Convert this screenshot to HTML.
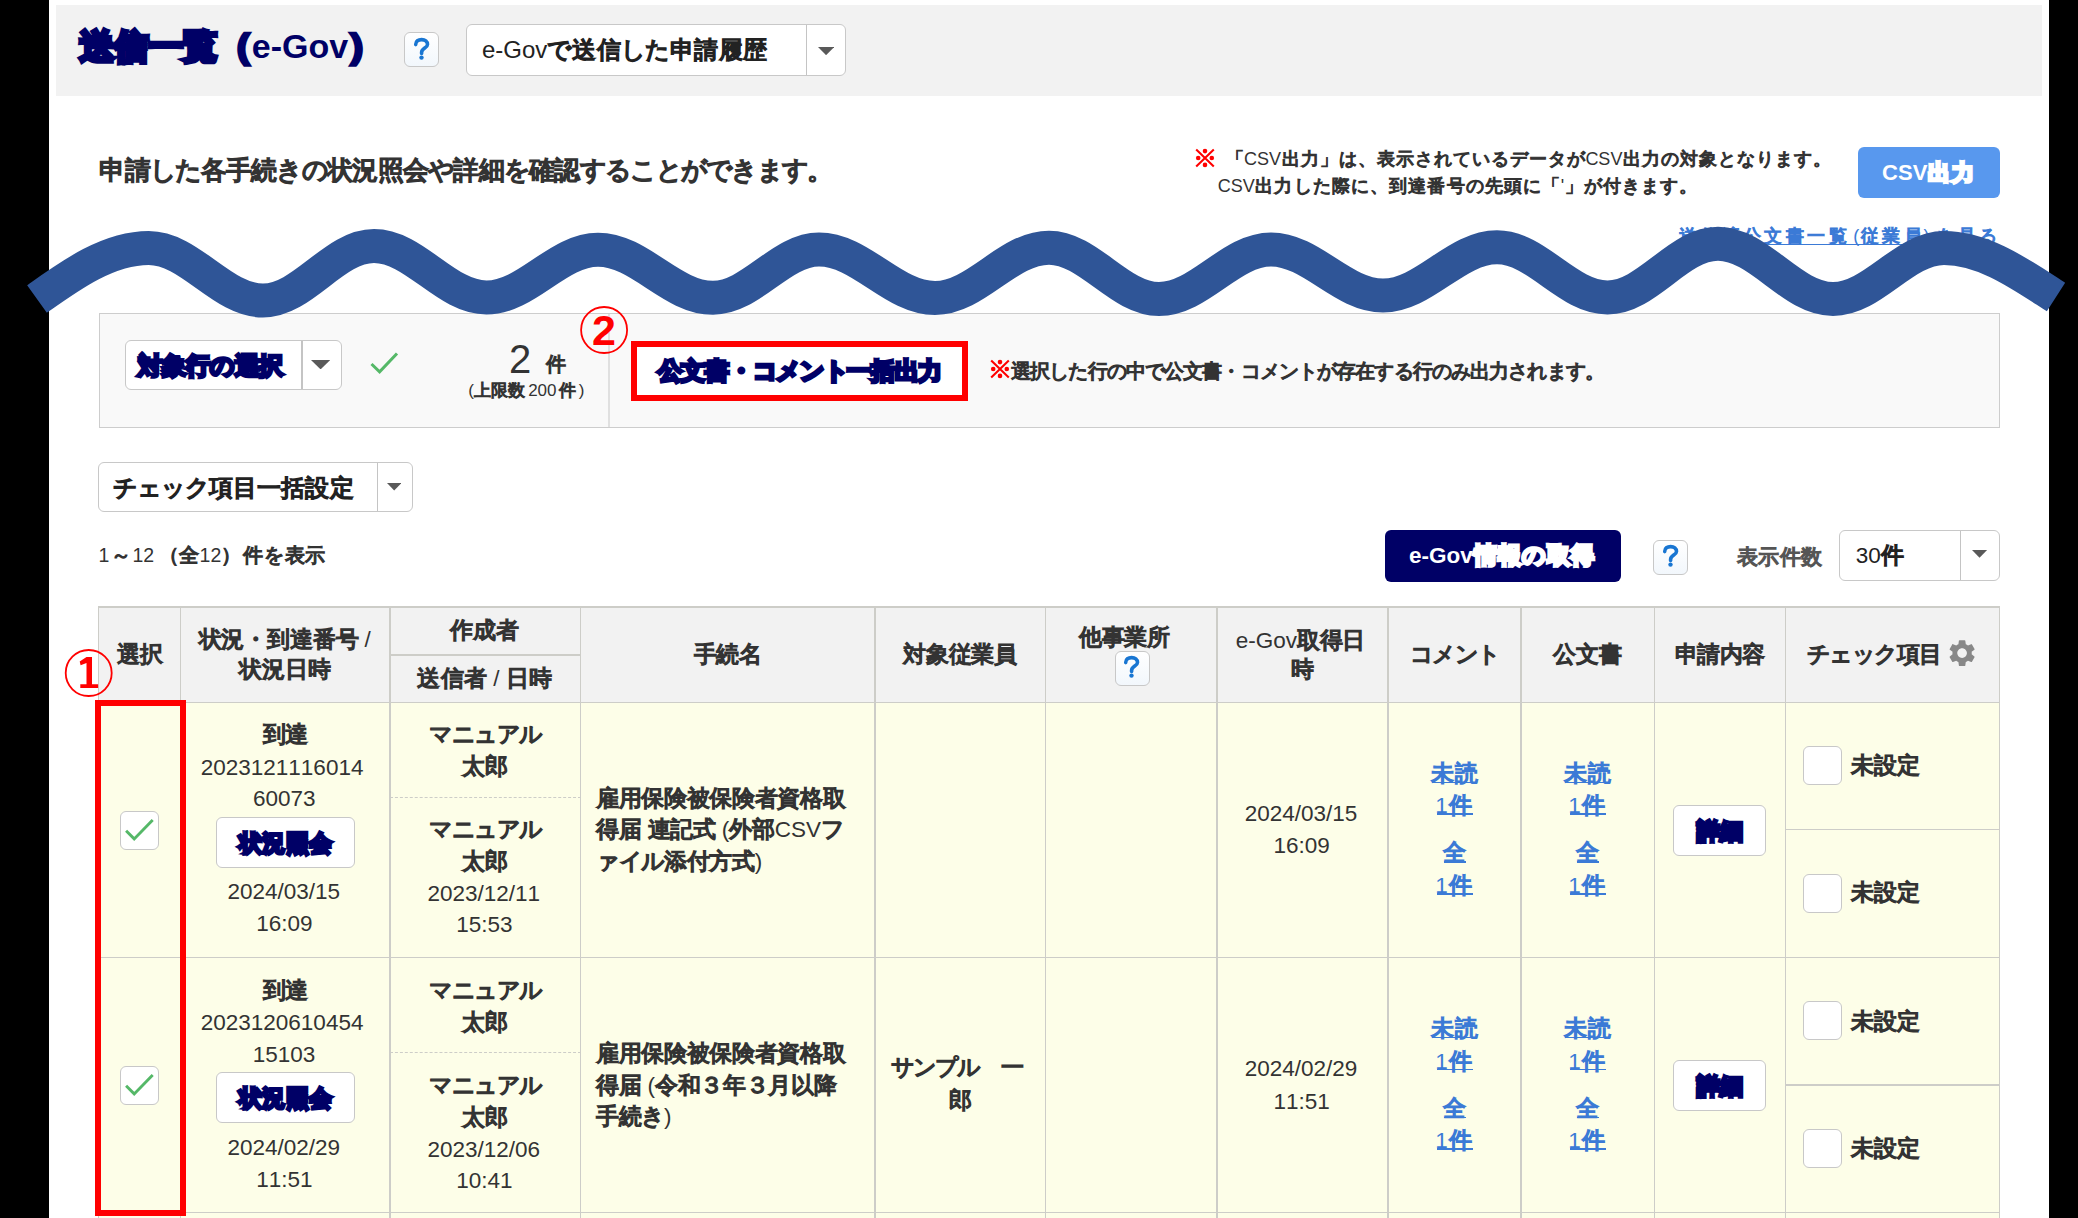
<!DOCTYPE html>
<html lang="ja"><head><meta charset="utf-8"><title>送信一覧（e-Gov）</title>
<style>
*{box-sizing:border-box;margin:0;padding:0}
html,body{width:2078px;height:1218px;overflow:hidden;background:#fff}
body{position:relative;font-family:"Liberation Sans",sans-serif;color:#333;font-kerning:none}
.a{position:absolute}
.t{position:absolute;white-space:nowrap}
.qb{position:absolute;width:35px;height:35px;border:1.5px solid #c8c8c8;border-radius:6px;background:linear-gradient(#fff,#f2f7fc);color:transparent;font-size:1px;overflow:hidden}
.dd{position:absolute;background:#fff;border:1.5px solid #c8c8c8;border-radius:6px}
.dd .dv{position:absolute;top:0;bottom:0;width:1.2px;background:#c4c4c4}
.j{display:inline-block;width:var(--p);text-align:center;-webkit-text-stroke:var(--s) currentColor}
.btn{position:absolute;background:#fff;border:1.5px solid #c8c8c8;border-radius:6px}
.cb{position:absolute;width:39px;height:39px;background:#fff;border:1.5px solid #c8c8c8;border-radius:6px}
</style></head><body>
<div class="a" style="left:0.00px;top:0.00px;width:49.00px;height:1218.00px;background:#000"></div>
<div class="a" style="left:2049.00px;top:0.00px;width:29.00px;height:1218.00px;background:#000"></div>
<div class="a" style="left:56.00px;top:4.50px;width:1986.00px;height:91.00px;background:#f2f2f2"></div>
<div class="t " style="left:79.30px;top:23.40px;font-size:34.00px;line-height:47.60px;color:#000066;font-weight:bold;--p:34.50px;--s:4.68px;"><span class="j">送</span><span class="j">信</span><span class="j">一</span><span class="j">覧</span><span class="j">（</span>e-Gov<span class="j">）</span></div>
<div class="qb" style="left:404.2px;top:32.2px"><svg width="35" height="35" viewBox="0 0 35 35" style="position:absolute;left:-1.5px;top:-1.5px"><path d="M11.7 12.6C11.7 9.1 14.3 7.6 17.6 7.6C21.1 7.6 23.5 9.6 23.5 12.4C23.5 15.8 17.6 16.4 17.6 20.4V21.4" fill="none" stroke="#1976d2" stroke-width="3.6" stroke-linecap="round"/><circle cx="17.5" cy="25.6" r="2.2" fill="#1976d2"/></svg>?</div>
<div class="dd" style="left:466.0px;top:24.2px;width:379.8px;height:51.7px"><div class="dv" style="left:339.2px"></div></div>
<svg class="a" style="left:818.00px;top:46.80px" width="16.20" height="8.20" viewBox="0 0 16.20 8.20"><path d="M0 0H16.20L8.10 8.20Z" fill="#595959"/></svg>
<div class="t " style="left:481.98px;top:32.90px;font-size:24.00px;line-height:33.60px;color:#222;--p:24.47px;--s:1.53px;">e-Gov<span class="j">で</span><span class="j">送</span><span class="j">信</span><span class="j">し</span><span class="j">た</span><span class="j">申</span><span class="j">請</span><span class="j">履</span><span class="j">歴</span></div>
<div class="t " style="left:99.42px;top:153.35px;font-size:25.50px;line-height:35.70px;color:#333;--p:25.29px;--s:1.62px;"><span class="j">申</span><span class="j">請</span><span class="j">し</span><span class="j">た</span><span class="j">各</span><span class="j">手</span><span class="j">続</span><span class="j">き</span><span class="j">の</span><span class="j">状</span><span class="j">況</span><span class="j">照</span><span class="j">会</span><span class="j">や</span><span class="j">詳</span><span class="j">細</span><span class="j">を</span><span class="j">確</span><span class="j">認</span><span class="j">す</span><span class="j">る</span><span class="j">こ</span><span class="j">と</span><span class="j">が</span><span class="j">で</span><span class="j">き</span><span class="j">ま</span><span class="j">す</span><span class="j">。</span></div>
<div class="t" style="left:1195.70px;top:147.30px;font-size:18px;line-height:22px;color:transparent">※</div>
<svg class="a" style="left:1193.70px;top:147.30px" width="22" height="22" viewBox="-11 -11 22 22"><path d="M-8.8 -8.4L8.8 8.4M8.8 -8.4L-8.8 8.4" stroke="#f00" stroke-width="2.1"/><circle cx="0" cy="-6.9" r="2.3" fill="#f00"/><circle cx="-6.8" cy="0" r="2.3" fill="#f00"/><circle cx="6.8" cy="0" r="2.3" fill="#f00"/><circle cx="0" cy="6.9" r="2.3" fill="#f00"/></svg>
<div class="t " style="left:1225.10px;top:146.60px;font-size:18.00px;line-height:25.20px;color:#333;--p:19.03px;--s:1.14px;"><span class="j">「</span>CSV<span class="j">出</span><span class="j">力</span><span class="j">」</span><span class="j">は</span><span class="j">、</span><span class="j">表</span><span class="j">示</span><span class="j">さ</span><span class="j">れ</span><span class="j">て</span><span class="j">い</span><span class="j">る</span><span class="j">デ</span><span class="j">ー</span><span class="j">タ</span><span class="j">が</span>CSV<span class="j">出</span><span class="j">力</span><span class="j">の</span><span class="j">対</span><span class="j">象</span><span class="j">と</span><span class="j">な</span><span class="j">り</span><span class="j">ま</span><span class="j">す</span><span class="j">。</span></div>
<div class="t " style="left:1217.69px;top:174.10px;font-size:18.00px;line-height:25.20px;color:#333;--p:19.14px;--s:1.14px;">CSV<span class="j">出</span><span class="j">力</span><span class="j">し</span><span class="j">た</span><span class="j">際</span><span class="j">に</span><span class="j">、</span><span class="j">到</span><span class="j">達</span><span class="j">番</span><span class="j">号</span><span class="j">の</span><span class="j">先</span><span class="j">頭</span><span class="j">に</span><span class="j">「</span>&#x27;<span class="j">」</span><span class="j">が</span><span class="j">付</span><span class="j">き</span><span class="j">ま</span><span class="j">す</span><span class="j">。</span></div>
<div class="a" style="left:1858px;top:147px;width:142px;height:51px;background:#5898ee;border-radius:6px"></div>
<div class="t " style="left:1882.10px;top:157.80px;font-size:22.00px;line-height:30.80px;color:#fff;font-weight:bold;--p:23.50px;--s:3.03px;">CSV<span class="j">出</span><span class="j">力</span></div>
<div class="t " style="left:1677.10px;top:223.60px;font-size:18.00px;line-height:25.20px;color:#3b7ad6;--p:21.41px;--s:1.14px;"><span class="j">送</span><span class="j">信</span><span class="j">済</span><span class="j">公</span><span class="j">文</span><span class="j">書</span><span class="j">一</span><span class="j">覧</span> (<span class="j">従</span><span class="j">業</span><span class="j">員</span>) <span class="j">を</span><span class="j">見</span><span class="j">る</span></div>
<div class="a" style="left:1677.60px;top:243.50px;width:320.60px;height:1.50px;background:#3b7ad6"></div>
<div class="a" style="left:98.50px;top:312.70px;width:1901.00px;height:115.70px;background:#f9f9f9;border:1.5px solid #cdcdcd"></div>
<div class="a" style="left:608.00px;top:314.00px;width:1.50px;height:113.00px;background:#e0e0e0"></div>
<div class="dd" style="left:125.0px;top:339.5px;width:217.0px;height:50.2px"><div class="dv" style="left:175.4px"></div></div>
<svg class="a" style="left:310.50px;top:360.10px" width="19.20" height="9.40" viewBox="0 0 19.20 9.40"><path d="M0 0H19.20L9.60 9.40Z" fill="#595959"/></svg>
<div class="t " style="left:137.80px;top:349.40px;font-size:24.00px;line-height:33.60px;color:#000066;font-weight:bold;--p:24.23px;--s:3.31px;"><span class="j">対</span><span class="j">象</span><span class="j">行</span><span class="j">の</span><span class="j">選</span><span class="j">択</span></div>
<svg class="a" style="left:360px;top:340px" width="50" height="45" viewBox="360 340 50 45"><path d="M371.5 364 L379.6 371.8 L397 353.5" fill="none" stroke="#55b868" stroke-width="3"/></svg>
<div class="t " style="left:508.99px;top:331.00px;font-size:40.00px;line-height:56.00px;color:#333;">2</div>
<div class="t " style="left:545.60px;top:350.20px;font-size:20.00px;line-height:28.00px;color:#333;--p:20.00px;--s:1.27px;"><span class="j">件</span></div>
<div class="t " style="left:468.35px;top:379.30px;font-size:17.00px;line-height:23.80px;color:#333;--p:16.80px;--s:1.08px;">(<span class="j">上</span><span class="j">限</span><span class="j">数</span></div>
<div class="t " style="left:528.15px;top:379.30px;font-size:17.00px;line-height:23.80px;color:#333;--p:22.25px;--s:1.08px;">200<span class="j">件</span>)</div>
<div class="a" style="left:631.00px;top:341.00px;width:337.00px;height:60.00px;background:#fff;border:6px solid #f00"></div>
<div class="t " style="left:657.80px;top:354.40px;font-size:24.00px;line-height:33.60px;color:#000066;font-weight:bold;--p:23.70px;--s:3.31px;"><span class="j">公</span><span class="j">文</span><span class="j">書</span><span class="j">・</span><span class="j">コ</span><span class="j">メ</span><span class="j">ン</span><span class="j">ト</span><span class="j">一</span><span class="j">括</span><span class="j">出</span><span class="j">力</span></div>
<div class="t" style="left:991.30px;top:358.10px;font-size:18px;line-height:22px;color:transparent">※</div>
<svg class="a" style="left:989.30px;top:358.10px" width="22" height="22" viewBox="-11 -11 22 22"><path d="M-8.8 -8.4L8.8 8.4M8.8 -8.4L-8.8 8.4" stroke="#f00" stroke-width="2.1"/><circle cx="0" cy="-6.9" r="2.3" fill="#f00"/><circle cx="-6.8" cy="0" r="2.3" fill="#f00"/><circle cx="6.8" cy="0" r="2.3" fill="#f00"/><circle cx="0" cy="6.9" r="2.3" fill="#f00"/></svg>
<div class="t " style="left:1011.02px;top:357.55px;font-size:19.50px;line-height:27.30px;color:#333;--p:19.13px;--s:1.24px;"><span class="j">選</span><span class="j">択</span><span class="j">し</span><span class="j">た</span><span class="j">行</span><span class="j">の</span><span class="j">中</span><span class="j">で</span><span class="j">公</span><span class="j">文</span><span class="j">書</span><span class="j">・</span><span class="j">コ</span><span class="j">メ</span><span class="j">ン</span><span class="j">ト</span><span class="j">が</span><span class="j">存</span><span class="j">在</span><span class="j">す</span><span class="j">る</span><span class="j">行</span><span class="j">の</span><span class="j">み</span><span class="j">出</span><span class="j">力</span><span class="j">さ</span><span class="j">れ</span><span class="j">ま</span><span class="j">す</span><span class="j">。</span></div>
<div class="dd" style="left:98.3px;top:461.9px;width:315.2px;height:50.5px"><div class="dv" style="left:278.0px"></div></div>
<svg class="a" style="left:386.80px;top:483.30px" width="14.40" height="7.50" viewBox="0 0 14.40 7.50"><path d="M0 0H14.40L7.20 7.50Z" fill="#595959"/></svg>
<div class="t " style="left:112.50px;top:471.40px;font-size:24.00px;line-height:33.60px;color:#222;--p:24.11px;--s:1.53px;"><span class="j">チ</span><span class="j">ェ</span><span class="j">ッ</span><span class="j">ク</span><span class="j">項</span><span class="j">目</span><span class="j">一</span><span class="j">括</span><span class="j">設</span><span class="j">定</span></div>
<div class="t " style="left:98.41px;top:542.15px;font-size:19.50px;line-height:27.30px;color:#333;--p:23.22px;--s:1.24px;">1<span class="j">～</span>12</div>
<div class="t " style="left:159.20px;top:542.15px;font-size:19.50px;line-height:27.30px;color:#333;--p:20.20px;--s:1.24px;"><span class="j">（</span><span class="j">全</span>12<span class="j">）</span></div>
<div class="t " style="left:242.93px;top:542.15px;font-size:19.50px;line-height:27.30px;color:#333;--p:20.71px;--s:1.24px;"><span class="j">件</span><span class="j">を</span><span class="j">表</span><span class="j">示</span></div>
<div class="a" style="left:1385.4px;top:529.5px;width:235.6px;height:52.3px;background:#000066;border-radius:6px"></div>
<div class="t " style="left:1409.12px;top:540.45px;font-size:22.50px;line-height:31.50px;color:#fff;font-weight:bold;--p:24.40px;--s:3.10px;">e-Gov<span class="j">情</span><span class="j">報</span><span class="j">の</span><span class="j">取</span><span class="j">得</span></div>
<div class="qb" style="left:1653.0px;top:539.6px"><svg width="35" height="35" viewBox="0 0 35 35" style="position:absolute;left:-1.5px;top:-1.5px"><path d="M11.7 12.6C11.7 9.1 14.3 7.6 17.6 7.6C21.1 7.6 23.5 9.6 23.5 12.4C23.5 15.8 17.6 16.4 17.6 20.4V21.4" fill="none" stroke="#1976d2" stroke-width="3.6" stroke-linecap="round"/><circle cx="17.5" cy="25.6" r="2.2" fill="#1976d2"/></svg>?</div>
<div class="t " style="left:1736.95px;top:541.50px;font-size:21.00px;line-height:29.40px;color:#555;--p:21.27px;--s:1.33px;"><span class="j">表</span><span class="j">示</span><span class="j">件</span><span class="j">数</span></div>
<div class="dd" style="left:1839.0px;top:529.7px;width:160.5px;height:51.7px"><div class="dv" style="left:119.7px"></div></div>
<svg class="a" style="left:1972.45px;top:550.10px" width="15.10" height="7.70" viewBox="0 0 15.10 7.70"><path d="M0 0H15.10L7.55 7.70Z" fill="#595959"/></svg>
<div class="t " style="left:1855.74px;top:540.45px;font-size:22.50px;line-height:31.50px;color:#222;--p:23.38px;--s:1.43px;">30<span class="j">件</span></div>
<div class="a" style="left:98.50px;top:607.00px;width:1901.00px;height:95.50px;background:#f2f2f2"></div>
<div class="a" style="left:98.50px;top:702.50px;width:1901.00px;height:516.50px;background:#fdfee8"></div>
<div class="a" style="left:97.75px;top:606.25px;width:1902.50px;height:1.50px;background:#cdcdc8"></div>
<div class="a" style="left:97.75px;top:701.75px;width:1902.50px;height:1.50px;background:#cdcdc8"></div>
<div class="a" style="left:97.75px;top:956.85px;width:1902.50px;height:1.50px;background:#cdcdc8"></div>
<div class="a" style="left:97.75px;top:1211.55px;width:1902.50px;height:1.50px;background:#cdcdc8"></div>
<div class="a" style="left:97.75px;top:606.25px;width:1.50px;height:612.00px;background:#cdcdc8"></div>
<div class="a" style="left:179.75px;top:606.25px;width:1.50px;height:612.00px;background:#cdcdc8"></div>
<div class="a" style="left:389.25px;top:606.25px;width:1.50px;height:612.00px;background:#cdcdc8"></div>
<div class="a" style="left:579.75px;top:606.25px;width:1.50px;height:612.00px;background:#cdcdc8"></div>
<div class="a" style="left:874.25px;top:606.25px;width:1.50px;height:612.00px;background:#cdcdc8"></div>
<div class="a" style="left:1044.75px;top:606.25px;width:1.50px;height:612.00px;background:#cdcdc8"></div>
<div class="a" style="left:1216.25px;top:606.25px;width:1.50px;height:612.00px;background:#cdcdc8"></div>
<div class="a" style="left:1387.25px;top:606.25px;width:1.50px;height:612.00px;background:#cdcdc8"></div>
<div class="a" style="left:1520.25px;top:606.25px;width:1.50px;height:612.00px;background:#cdcdc8"></div>
<div class="a" style="left:1653.75px;top:606.25px;width:1.50px;height:612.00px;background:#cdcdc8"></div>
<div class="a" style="left:1784.75px;top:606.25px;width:1.50px;height:612.00px;background:#cdcdc8"></div>
<div class="a" style="left:1998.75px;top:606.25px;width:1.50px;height:612.00px;background:#cdcdc8"></div>
<div class="a" style="left:390.00px;top:654.25px;width:190.50px;height:1.50px;background:#cdcdc8"></div>
<div class="t " style="left:116.88px;top:639.15px;font-size:22.50px;line-height:31.50px;color:#333;--p:23.08px;--s:1.43px;"><span class="j">選</span><span class="j">択</span></div>
<div class="t " style="left:198.68px;top:624.45px;font-size:22.50px;line-height:31.50px;color:#333;--p:22.82px;--s:1.43px;"><span class="j">状</span><span class="j">況</span><span class="j">・</span><span class="j">到</span><span class="j">達</span><span class="j">番</span><span class="j">号</span> /</div>
<div class="t " style="left:239.38px;top:654.45px;font-size:22.50px;line-height:31.50px;color:#333;--p:22.84px;--s:1.43px;"><span class="j">状</span><span class="j">況</span><span class="j">日</span><span class="j">時</span></div>
<div class="t " style="left:450.27px;top:615.45px;font-size:22.50px;line-height:31.50px;color:#333;--p:22.98px;--s:1.43px;"><span class="j">作</span><span class="j">成</span><span class="j">者</span></div>
<div class="t " style="left:417.18px;top:663.15px;font-size:22.50px;line-height:31.50px;color:#333;--p:23.29px;--s:1.43px;"><span class="j">送</span><span class="j">信</span><span class="j">者</span> / <span class="j">日</span><span class="j">時</span></div>
<div class="t " style="left:693.88px;top:639.45px;font-size:22.50px;line-height:31.50px;color:#333;--p:22.42px;--s:1.43px;"><span class="j">手</span><span class="j">続</span><span class="j">名</span></div>
<div class="t " style="left:903.38px;top:639.15px;font-size:22.50px;line-height:31.50px;color:#333;--p:22.63px;--s:1.43px;"><span class="j">対</span><span class="j">象</span><span class="j">従</span><span class="j">業</span><span class="j">員</span></div>
<div class="t " style="left:1079.08px;top:622.45px;font-size:22.50px;line-height:31.50px;color:#333;--p:22.66px;--s:1.43px;"><span class="j">他</span><span class="j">事</span><span class="j">業</span><span class="j">所</span></div>
<div class="qb" style="left:1114.7px;top:650.5px"><svg width="35" height="35" viewBox="0 0 35 35" style="position:absolute;left:-1.5px;top:-1.5px"><path d="M11.7 12.6C11.7 9.1 14.3 7.6 17.6 7.6C21.1 7.6 23.5 9.6 23.5 12.4C23.5 15.8 17.6 16.4 17.6 20.4V21.4" fill="none" stroke="#1976d2" stroke-width="3.6" stroke-linecap="round"/><circle cx="17.5" cy="25.6" r="2.2" fill="#1976d2"/></svg>?</div>
<div class="t " style="left:1235.64px;top:625.45px;font-size:22.50px;line-height:31.50px;color:#333;--p:22.79px;--s:1.43px;">e-Gov<span class="j">取</span><span class="j">得</span><span class="j">日</span></div>
<div class="t " style="left:1290.88px;top:653.95px;font-size:22.50px;line-height:31.50px;color:#333;--p:23.25px;--s:1.43px;"><span class="j">時</span></div>
<div class="t " style="left:1409.58px;top:639.45px;font-size:22.50px;line-height:31.50px;color:#333;--p:22.49px;--s:1.43px;"><span class="j">コ</span><span class="j">メ</span><span class="j">ン</span><span class="j">ト</span></div>
<div class="t " style="left:1553.38px;top:639.35px;font-size:22.50px;line-height:31.50px;color:#333;--p:22.68px;--s:1.43px;"><span class="j">公</span><span class="j">文</span><span class="j">書</span></div>
<div class="t " style="left:1674.88px;top:639.35px;font-size:22.50px;line-height:31.50px;color:#333;--p:22.51px;--s:1.43px;"><span class="j">申</span><span class="j">請</span><span class="j">内</span><span class="j">容</span></div>
<div class="t " style="left:1806.88px;top:639.35px;font-size:22.50px;line-height:31.50px;color:#333;--p:22.47px;--s:1.43px;"><span class="j">チ</span><span class="j">ェ</span><span class="j">ッ</span><span class="j">ク</span><span class="j">項</span><span class="j">目</span></div>
<svg class="a" style="left:1946.4px;top:637.4px" width="32.2" height="32.2" viewBox="0 0 24 24"><path fill="#888" d="M19.14 12.94c.04-.3.06-.61.06-.94 0-.32-.02-.64-.07-.94l2.03-1.58a.49.49 0 0 0 .12-.61l-1.92-3.32a.488.488 0 0 0-.59-.22l-2.39.96c-.5-.38-1.03-.7-1.62-.94l-.36-2.540a.484.484 0 0 0-.48-.41h-3.84c-.24 0-.43.17-.47.41l-.36 2.54c-.59.24-1.13.57-1.62.94l-2.39-.96c-.22-.08-.47 0-.59.22L2.74 8.87c-.12.21-.08.47.12.61l2.03 1.58c-.05.3-.09.63-.09.94s.02.64.07.94l-2.03 1.58a.49.49 0 0 0-.12.61l1.920 3.32c.12.22.37.29.59.22l2.39-.96c.5.38 1.03.7 1.62.94l.36 2.54c.05.24.24.41.48.41h3.84c.24 0 .44-.17.47-.41l.36-2.54c.59-.24 1.13-.56 1.62-.94l2.39.96c.22.08.47 0 .59-.22l1.92-3.32c.12-.22.07-.47-.12-.61l-2.01-1.58zM12 15.6c-1.98 0-3.6-1.62-3.6-3.6s1.62-3.6 3.6-3.6 3.6 1.62 3.6 3.6-1.62 3.6-3.6 3.6z"/></svg>
<div class="cb" style="left:120.2px;top:811.0px"></div>
<svg class="a" style="left:120.2px;top:811.0px" width="40" height="40" viewBox="0 0 40 40"><path d="M6.1 19.8 L14.2 27.9 L32.7 9" fill="none" stroke="#55b868" stroke-width="2.9"/></svg>
<div class="t " style="left:262.62px;top:719.45px;font-size:22.50px;line-height:31.50px;color:#333;--p:22.62px;--s:1.43px;"><span class="j">到</span><span class="j">達</span></div>
<div class="t " style="left:200.76px;top:751.95px;font-size:22.50px;line-height:31.50px;color:#333;">2023121116014</div>
<div class="t " style="left:252.92px;top:783.45px;font-size:22.50px;line-height:31.50px;color:#333;">60073</div>
<div class="btn" style="left:215.7px;top:816.5px;width:139.3px;height:51.5px"></div>
<div class="t " style="left:239.07px;top:827.75px;font-size:22.50px;line-height:31.50px;color:#000066;font-weight:bold;--p:23.26px;--s:3.10px;"><span class="j">状</span><span class="j">況</span><span class="j">照</span><span class="j">会</span></div>
<div class="t " style="left:227.40px;top:876.45px;font-size:22.50px;line-height:31.50px;color:#333;">2024/03/15</div>
<div class="t " style="left:256.17px;top:908.45px;font-size:22.50px;line-height:31.50px;color:#333;">16:09</div>
<div class="t " style="left:428.88px;top:719.45px;font-size:22.50px;line-height:31.50px;color:#333;--p:22.65px;--s:1.43px;"><span class="j">マ</span><span class="j">ニ</span><span class="j">ュ</span><span class="j">ア</span><span class="j">ル</span></div>
<div class="t " style="left:461.88px;top:751.45px;font-size:22.50px;line-height:31.50px;color:#333;--p:22.88px;--s:1.43px;"><span class="j">太</span><span class="j">郎</span></div>
<div class="a" style="left:390.0px;top:797.2px;width:190.5px;height:0;border-top:1.5px dashed #cdcdc8"></div>
<div class="t " style="left:428.88px;top:814.45px;font-size:22.50px;line-height:31.50px;color:#333;--p:22.65px;--s:1.43px;"><span class="j">マ</span><span class="j">ニ</span><span class="j">ュ</span><span class="j">ア</span><span class="j">ル</span></div>
<div class="t " style="left:461.88px;top:846.45px;font-size:22.50px;line-height:31.50px;color:#333;--p:22.88px;--s:1.43px;"><span class="j">太</span><span class="j">郎</span></div>
<div class="t " style="left:427.48px;top:878.45px;font-size:22.50px;line-height:31.50px;color:#333;">2023/12/11</div>
<div class="t " style="left:456.13px;top:909.45px;font-size:22.50px;line-height:31.50px;color:#333;">15:53</div>
<div class="t " style="left:595.88px;top:782.95px;font-size:22.50px;line-height:31.50px;color:#333;--p:22.70px;--s:1.43px;"><span class="j">雇</span><span class="j">用</span><span class="j">保</span><span class="j">険</span><span class="j">被</span><span class="j">保</span><span class="j">険</span><span class="j">者</span><span class="j">資</span><span class="j">格</span><span class="j">取</span></div>
<div class="t " style="left:595.88px;top:814.45px;font-size:22.50px;line-height:31.50px;color:#333;--p:22.70px;--s:1.43px;"><span class="j">得</span><span class="j">届</span> <span class="j">連</span><span class="j">記</span><span class="j">式</span> (<span class="j">外</span><span class="j">部</span>CSV<span class="j">フ</span></div>
<div class="t " style="left:595.88px;top:845.95px;font-size:22.50px;line-height:31.50px;color:#333;--p:22.70px;--s:1.43px;"><span class="j">ァ</span><span class="j">イ</span><span class="j">ル</span><span class="j">添</span><span class="j">付</span><span class="j">方</span><span class="j">式</span>)</div>
<div class="t " style="left:1244.65px;top:797.85px;font-size:22.50px;line-height:31.50px;color:#333;">2024/03/15</div>
<div class="t " style="left:1273.42px;top:830.45px;font-size:22.50px;line-height:31.50px;color:#333;">16:09</div>
<div class="t " style="left:1430.88px;top:757.95px;font-size:22.50px;line-height:31.50px;color:#3b7ad6;--p:23.73px;--s:1.43px;"><span class="j">未</span><span class="j">読</span></div>
<div class="a" style="left:1432.00px;top:781.85px;width:45.20px;height:1.50px;background:#3b7ad6"></div>
<div class="t " style="left:1435.29px;top:790.45px;font-size:22.50px;line-height:31.50px;color:#3b7ad6;--p:25.54px;--s:1.43px;">1<span class="j">件</span></div>
<div class="a" style="left:1437.00px;top:813.45px;width:35.70px;height:1.50px;background:#3b7ad6"></div>
<div class="t " style="left:1443.39px;top:837.45px;font-size:22.50px;line-height:31.50px;color:#3b7ad6;--p:22.62px;--s:1.43px;"><span class="j">全</span></div>
<div class="a" style="left:1444.00px;top:861.45px;width:21.50px;height:1.50px;background:#3b7ad6"></div>
<div class="t " style="left:1435.29px;top:870.25px;font-size:22.50px;line-height:31.50px;color:#3b7ad6;--p:25.54px;--s:1.43px;">1<span class="j">件</span></div>
<div class="a" style="left:1437.00px;top:893.25px;width:35.70px;height:1.50px;background:#3b7ad6"></div>
<div class="t " style="left:1563.88px;top:757.95px;font-size:22.50px;line-height:31.50px;color:#3b7ad6;--p:23.73px;--s:1.43px;"><span class="j">未</span><span class="j">読</span></div>
<div class="a" style="left:1565.00px;top:781.85px;width:45.20px;height:1.50px;background:#3b7ad6"></div>
<div class="t " style="left:1568.29px;top:790.45px;font-size:22.50px;line-height:31.50px;color:#3b7ad6;--p:25.54px;--s:1.43px;">1<span class="j">件</span></div>
<div class="a" style="left:1570.00px;top:813.45px;width:35.70px;height:1.50px;background:#3b7ad6"></div>
<div class="t " style="left:1576.39px;top:837.45px;font-size:22.50px;line-height:31.50px;color:#3b7ad6;--p:22.62px;--s:1.43px;"><span class="j">全</span></div>
<div class="a" style="left:1577.00px;top:861.45px;width:21.50px;height:1.50px;background:#3b7ad6"></div>
<div class="t " style="left:1568.29px;top:870.25px;font-size:22.50px;line-height:31.50px;color:#3b7ad6;--p:25.54px;--s:1.43px;">1<span class="j">件</span></div>
<div class="a" style="left:1570.00px;top:893.25px;width:35.70px;height:1.50px;background:#3b7ad6"></div>
<div class="btn" style="left:1672.7px;top:804.7px;width:93.6px;height:51.3px"></div>
<div class="t " style="left:1696.88px;top:815.95px;font-size:22.50px;line-height:31.50px;color:#000066;font-weight:bold;--p:23.12px;--s:3.10px;"><span class="j">詳</span><span class="j">細</span></div>
<div class="cb" style="left:1803.0px;top:746.0px"></div>
<div class="t " style="left:1850.88px;top:750.45px;font-size:22.50px;line-height:31.50px;color:#333;--p:22.88px;--s:1.43px;"><span class="j">未</span><span class="j">設</span><span class="j">定</span></div>
<div class="a" style="left:1785.50px;top:828.95px;width:214.00px;height:1.50px;background:#cdcdc8"></div>
<div class="cb" style="left:1803.0px;top:874.0px"></div>
<div class="t " style="left:1850.88px;top:877.45px;font-size:22.50px;line-height:31.50px;color:#333;--p:22.88px;--s:1.43px;"><span class="j">未</span><span class="j">設</span><span class="j">定</span></div>
<div class="cb" style="left:120.2px;top:1066.1px"></div>
<svg class="a" style="left:120.2px;top:1066.1px" width="40" height="40" viewBox="0 0 40 40"><path d="M6.1 19.8 L14.2 27.9 L32.7 9" fill="none" stroke="#55b868" stroke-width="2.9"/></svg>
<div class="t " style="left:262.62px;top:974.55px;font-size:22.50px;line-height:31.50px;color:#333;--p:22.62px;--s:1.43px;"><span class="j">到</span><span class="j">達</span></div>
<div class="t " style="left:200.76px;top:1007.05px;font-size:22.50px;line-height:31.50px;color:#333;">2023120610454</div>
<div class="t " style="left:252.63px;top:1038.55px;font-size:22.50px;line-height:31.50px;color:#333;">15103</div>
<div class="btn" style="left:215.7px;top:1071.6px;width:139.3px;height:51.5px"></div>
<div class="t " style="left:239.07px;top:1082.85px;font-size:22.50px;line-height:31.50px;color:#000066;font-weight:bold;--p:23.26px;--s:3.10px;"><span class="j">状</span><span class="j">況</span><span class="j">照</span><span class="j">会</span></div>
<div class="t " style="left:227.46px;top:1131.55px;font-size:22.50px;line-height:31.50px;color:#333;">2024/02/29</div>
<div class="t " style="left:256.19px;top:1163.55px;font-size:22.50px;line-height:31.50px;color:#333;">11:51</div>
<div class="t " style="left:428.88px;top:974.55px;font-size:22.50px;line-height:31.50px;color:#333;--p:22.65px;--s:1.43px;"><span class="j">マ</span><span class="j">ニ</span><span class="j">ュ</span><span class="j">ア</span><span class="j">ル</span></div>
<div class="t " style="left:461.88px;top:1006.55px;font-size:22.50px;line-height:31.50px;color:#333;--p:22.88px;--s:1.43px;"><span class="j">太</span><span class="j">郎</span></div>
<div class="a" style="left:390.0px;top:1052.3px;width:190.5px;height:0;border-top:1.5px dashed #cdcdc8"></div>
<div class="t " style="left:428.88px;top:1069.55px;font-size:22.50px;line-height:31.50px;color:#333;--p:22.65px;--s:1.43px;"><span class="j">マ</span><span class="j">ニ</span><span class="j">ュ</span><span class="j">ア</span><span class="j">ル</span></div>
<div class="t " style="left:461.88px;top:1101.55px;font-size:22.50px;line-height:31.50px;color:#333;--p:22.88px;--s:1.43px;"><span class="j">太</span><span class="j">郎</span></div>
<div class="t " style="left:427.42px;top:1133.55px;font-size:22.50px;line-height:31.50px;color:#333;">2023/12/06</div>
<div class="t " style="left:456.19px;top:1164.55px;font-size:22.50px;line-height:31.50px;color:#333;">10:41</div>
<div class="t " style="left:595.88px;top:1038.05px;font-size:22.50px;line-height:31.50px;color:#333;--p:22.70px;--s:1.43px;"><span class="j">雇</span><span class="j">用</span><span class="j">保</span><span class="j">険</span><span class="j">被</span><span class="j">保</span><span class="j">険</span><span class="j">者</span><span class="j">資</span><span class="j">格</span><span class="j">取</span></div>
<div class="t " style="left:595.88px;top:1069.55px;font-size:22.50px;line-height:31.50px;color:#333;--p:22.70px;--s:1.43px;"><span class="j">得</span><span class="j">届</span> (<span class="j">令</span><span class="j">和</span><span class="j">３</span><span class="j">年</span><span class="j">３</span><span class="j">月</span><span class="j">以</span><span class="j">降</span></div>
<div class="t " style="left:595.88px;top:1101.05px;font-size:22.50px;line-height:31.50px;color:#333;--p:22.70px;--s:1.43px;"><span class="j">手</span><span class="j">続</span><span class="j">き</span>)</div>
<div class="t " style="left:891.48px;top:1052.35px;font-size:22.50px;line-height:31.50px;color:#333;--p:21.94px;--s:1.43px;"><span class="j">サ</span><span class="j">ン</span><span class="j">プ</span><span class="j">ル</span><span class="j">　</span><span class="j">一</span></div>
<div class="t " style="left:949.39px;top:1084.65px;font-size:22.50px;line-height:31.50px;color:#333;--p:22.62px;--s:1.43px;"><span class="j">郎</span></div>
<div class="t " style="left:1244.71px;top:1052.95px;font-size:22.50px;line-height:31.50px;color:#333;">2024/02/29</div>
<div class="t " style="left:1273.44px;top:1085.55px;font-size:22.50px;line-height:31.50px;color:#333;">11:51</div>
<div class="t " style="left:1430.88px;top:1013.05px;font-size:22.50px;line-height:31.50px;color:#3b7ad6;--p:23.73px;--s:1.43px;"><span class="j">未</span><span class="j">読</span></div>
<div class="a" style="left:1432.00px;top:1036.95px;width:45.20px;height:1.50px;background:#3b7ad6"></div>
<div class="t " style="left:1435.29px;top:1045.55px;font-size:22.50px;line-height:31.50px;color:#3b7ad6;--p:25.54px;--s:1.43px;">1<span class="j">件</span></div>
<div class="a" style="left:1437.00px;top:1068.55px;width:35.70px;height:1.50px;background:#3b7ad6"></div>
<div class="t " style="left:1443.39px;top:1092.55px;font-size:22.50px;line-height:31.50px;color:#3b7ad6;--p:22.62px;--s:1.43px;"><span class="j">全</span></div>
<div class="a" style="left:1444.00px;top:1116.55px;width:21.50px;height:1.50px;background:#3b7ad6"></div>
<div class="t " style="left:1435.29px;top:1125.35px;font-size:22.50px;line-height:31.50px;color:#3b7ad6;--p:25.54px;--s:1.43px;">1<span class="j">件</span></div>
<div class="a" style="left:1437.00px;top:1148.35px;width:35.70px;height:1.50px;background:#3b7ad6"></div>
<div class="t " style="left:1563.88px;top:1013.05px;font-size:22.50px;line-height:31.50px;color:#3b7ad6;--p:23.73px;--s:1.43px;"><span class="j">未</span><span class="j">読</span></div>
<div class="a" style="left:1565.00px;top:1036.95px;width:45.20px;height:1.50px;background:#3b7ad6"></div>
<div class="t " style="left:1568.29px;top:1045.55px;font-size:22.50px;line-height:31.50px;color:#3b7ad6;--p:25.54px;--s:1.43px;">1<span class="j">件</span></div>
<div class="a" style="left:1570.00px;top:1068.55px;width:35.70px;height:1.50px;background:#3b7ad6"></div>
<div class="t " style="left:1576.39px;top:1092.55px;font-size:22.50px;line-height:31.50px;color:#3b7ad6;--p:22.62px;--s:1.43px;"><span class="j">全</span></div>
<div class="a" style="left:1577.00px;top:1116.55px;width:21.50px;height:1.50px;background:#3b7ad6"></div>
<div class="t " style="left:1568.29px;top:1125.35px;font-size:22.50px;line-height:31.50px;color:#3b7ad6;--p:25.54px;--s:1.43px;">1<span class="j">件</span></div>
<div class="a" style="left:1570.00px;top:1148.35px;width:35.70px;height:1.50px;background:#3b7ad6"></div>
<div class="btn" style="left:1672.7px;top:1059.8px;width:93.6px;height:51.3px"></div>
<div class="t " style="left:1696.88px;top:1071.05px;font-size:22.50px;line-height:31.50px;color:#000066;font-weight:bold;--p:23.12px;--s:3.10px;"><span class="j">詳</span><span class="j">細</span></div>
<div class="cb" style="left:1803.0px;top:1001.1px"></div>
<div class="t " style="left:1850.88px;top:1005.55px;font-size:22.50px;line-height:31.50px;color:#333;--p:22.88px;--s:1.43px;"><span class="j">未</span><span class="j">設</span><span class="j">定</span></div>
<div class="a" style="left:1785.50px;top:1084.05px;width:214.00px;height:1.50px;background:#cdcdc8"></div>
<div class="cb" style="left:1803.0px;top:1129.1px"></div>
<div class="t " style="left:1850.88px;top:1132.55px;font-size:22.50px;line-height:31.50px;color:#333;--p:22.88px;--s:1.43px;"><span class="j">未</span><span class="j">設</span><span class="j">定</span></div>
<div class="a" style="left:95.40px;top:700.40px;width:90.30px;height:515.50px;border:6px solid #f00"></div>
<svg class="a" style="left:0;top:0" width="700" height="720" viewBox="0 0 700 720">
<circle cx="604.1" cy="330" r="23" fill="none" stroke="#f00" stroke-width="1.8"/>
<text x="604" y="344.8" text-anchor="middle" font-family="Liberation Sans" font-weight="bold" font-size="43" fill="#f00">2</text>
<circle cx="88.7" cy="673" r="23" fill="none" stroke="#f00" stroke-width="1.8"/>
<path fill="#f00" d="M79.7 661.5 L86.5 657 L92 657 L92 684.2 L98.1 684.2 L98.1 688 L80.3 688 L80.3 684.2 L86.5 684.2 L86.5 663 L80.6 665.2 Z"/>
</svg>
<svg class="a" style="left:0;top:0" width="2078" height="400" viewBox="0 0 2078 400"><path d="M37.0 299.0 C70.5 275.2 108.2 248.0 148.7 248.0 C190.2 248.0 221.5 300.5 263.0 300.5 C303.3 300.5 333.7 246.0 374.0 246.0 C414.8 246.0 445.7 297.5 486.5 297.5 C527.0 297.5 557.5 249.7 598.0 249.7 C639.7 249.7 671.3 297.8 713.0 297.8 C751.5 297.8 780.5 249.5 819.0 249.5 C861.1 249.5 892.9 298.0 935.0 298.0 C976.4 298.0 1007.6 247.7 1049.0 247.7 C1088.9 247.7 1119.1 299.0 1159.0 299.0 C1199.7 299.0 1230.3 249.5 1271.0 249.5 C1311.7 249.5 1342.3 295.6 1383.0 295.6 C1424.4 295.6 1455.6 247.3 1497.0 247.3 C1537.1 247.3 1567.4 297.4 1607.5 297.4 C1647.6 297.4 1677.9 243.8 1718.0 243.8 C1759.7 243.8 1791.3 299.0 1833.0 299.0 C1873.3 299.0 1903.7 248.0 1944.0 248.0 C1984.7 248.0 2022.4 275.5 2056.0 297.0" fill="none" stroke="#2f5597" stroke-width="34"/></svg>
</body></html>
